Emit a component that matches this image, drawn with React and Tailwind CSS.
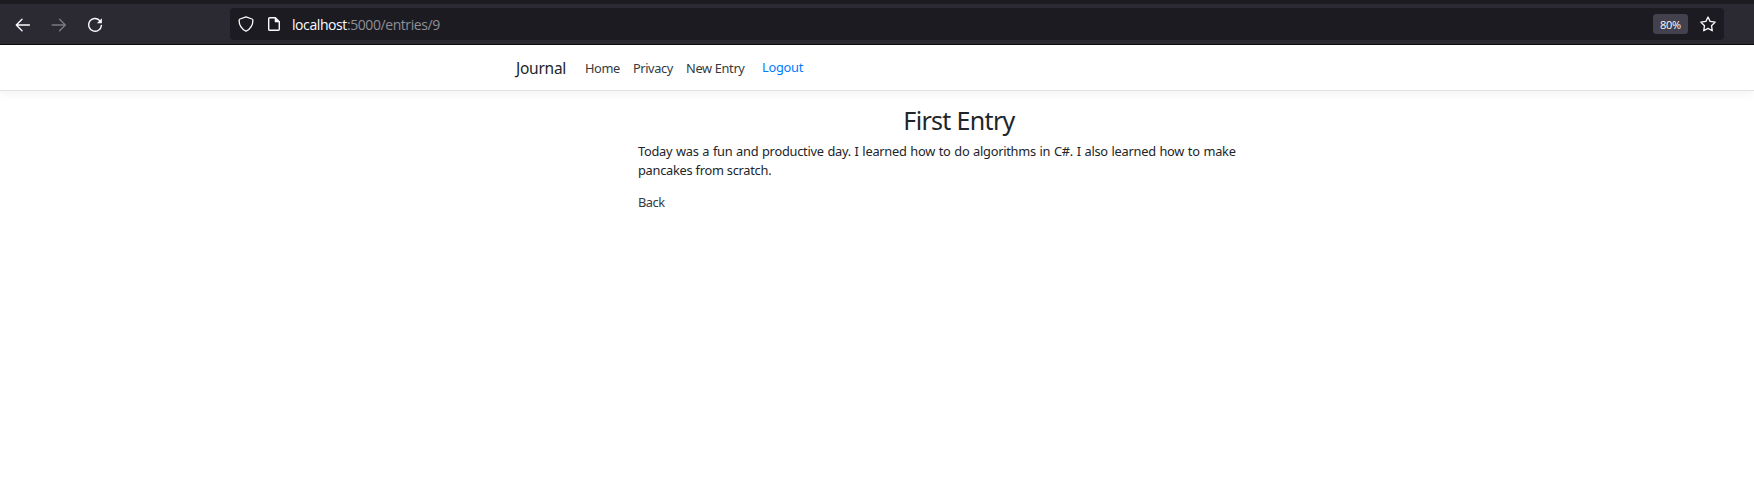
function BackArrow() {
  return (
    <svg viewBox="0 0 16 16" className="size-4" fill="none" stroke="currentColor" strokeWidth="1.4" strokeLinecap="round" strokeLinejoin="round">
      <path d="M14.4 8H1.8M7 2.2 1.3 8l5.7 5.8" />
    </svg>
  );
}

function ForwardArrow() {
  return (
    <svg viewBox="0 0 16 16" className="size-4" fill="none" stroke="currentColor" strokeWidth="1.4" strokeLinecap="round" strokeLinejoin="round">
      <path d="M1.2 8h12.6M8.6 2.2 14.3 8l-5.7 5.8" />
    </svg>
  );
}

function Reload() {
  return (
    <svg viewBox="0 0 16 16" className="size-4" fill="none" stroke="currentColor" strokeWidth="1.4" strokeLinecap="round">
      <path d="M12.6 3.4A6.4 6.4 0 1 0 14.4 8.4" />
      <path d="M14.9 1.3v4.5a.5.5 0 0 1-.5.5H9.9z" fill="currentColor" stroke="none" />
    </svg>
  );
}

function Shield() {
  return (
    <svg viewBox="0 0 16 16" className="size-4" fill="none" stroke="currentColor" strokeWidth="1.3" strokeLinejoin="round">
      <path d="M8 .9 14 3q.9.3.9 1.2C14.9 9 12.2 13 8 15.3 3.8 13 1.1 9 1.1 4.2Q1.1 3.3 2 3z" />
    </svg>
  );
}

function Page() {
  return (
    <svg viewBox="0 0 16 16" className="size-4" fill="none" stroke="currentColor" strokeWidth="1.4" strokeLinejoin="round">
      <path d="M3.7 1.7H9.3L13.3 5.7V13.3a1 1 0 0 1-1 1H3.7a1 1 0 0 1-1-1V2.7a1 1 0 0 1 1-1z" />
      <path d="M9 1.5v4.5h4.5z" fill="currentColor" strokeWidth=".6" />
    </svg>
  );
}

function Star() {
  return (
    <svg viewBox="0 0 16 16" className="size-4" fill="none" stroke="currentColor" strokeWidth="1.3" strokeLinejoin="round">
      <path d="M8 1 10.1 5.4 15.2 6.1 11.5 9.7 12.3 14.8 8 12.4 3.7 14.8 4.5 9.7.8 6.1 5.9 5.4z" />
    </svg>
  );
}

function BrowserBar() {
  return (
    <div className="flex h-[45px] items-center border-t-4 border-b border-t-[#1c1b22] border-b-[#0c0c0d] bg-[#2b2a33] pl-[15px] text-[#fbfbfe]">
      <span className="pt-px"><BackArrow /></span>
      <span className="ml-5 pt-px text-[#7b7a80]"><ForwardArrow /></span>
      <span className="ml-5 pt-px"><Reload /></span>
      <div className="ml-[127px] flex h-8 w-[1494px] items-center rounded bg-[#1c1b22] pl-2 font-['Open_Sans',sans-serif]">
        <Shield />
        <span className="ml-3"><Page /></span>
        <span className="ml-[10px] w-[160px] pt-[2px] text-[14px] leading-5 whitespace-nowrap tracking-[-0.42px] text-[#8f8f95]">
          <span className="text-[#fbfbfe]">localhost</span>:5000/entries/9
        </span>
        <span className="ml-auto flex h-5 w-[35px] items-center justify-center rounded-[3px] bg-[#42414d] pt-[2px] text-[11px] tracking-[-0.3px]">80%</span>
        <span className="mr-2 ml-3"><Star /></span>
      </div>
    </div>
  );
}

function NavBar() {
  return (
    <header className="flex h-[46px] border-b border-[#dfe1e5] bg-white pt-[13px] pl-[516px] text-[12.8px] leading-5 whitespace-nowrap text-[#343a40] shadow-[0_3px_10px_rgba(0,0,0,0.05)]">
      <a className="w-[69px] text-[15.5px] tracking-[-0.25px] text-[#212529]">Journal</a>
      <a className="w-12 tracking-[-0.4px]">Home</a>
      <a className="w-[53px] tracking-[-0.42px]">Privacy</a>
      <a className="w-[76px] tracking-[-0.33px]">New Entry</a>
      <a className="-mt-px tracking-[-0.25px] text-[#007bff]">Logout</a>
    </header>
  );
}

export default function App() {
  return (
    <div className="h-[493px] overflow-hidden bg-white font-['Noto_Sans',sans-serif]">
      <BrowserBar />
      <NavBar />
      <main className="ml-[638px] w-[642px] pt-[14px] text-[12.8px] leading-[19.2px] text-[#212529]">
        <h1 className="text-center text-[25px] leading-[31px] tracking-[-0.67px]">First Entry</h1>
        <p className="mt-[6px] whitespace-nowrap tracking-[-0.25px]">
          <span className="[word-spacing:0.62px]">
            Today was a fun and productive day. I learned how to do algorithms in C#. I also learned how to make
          </span>
          <br />
          pancakes from scratch.
        </p>
        <a className="mt-[13px] block tracking-[-0.45px] text-[#343a40]">Back</a>
      </main>
    </div>
  );
}
